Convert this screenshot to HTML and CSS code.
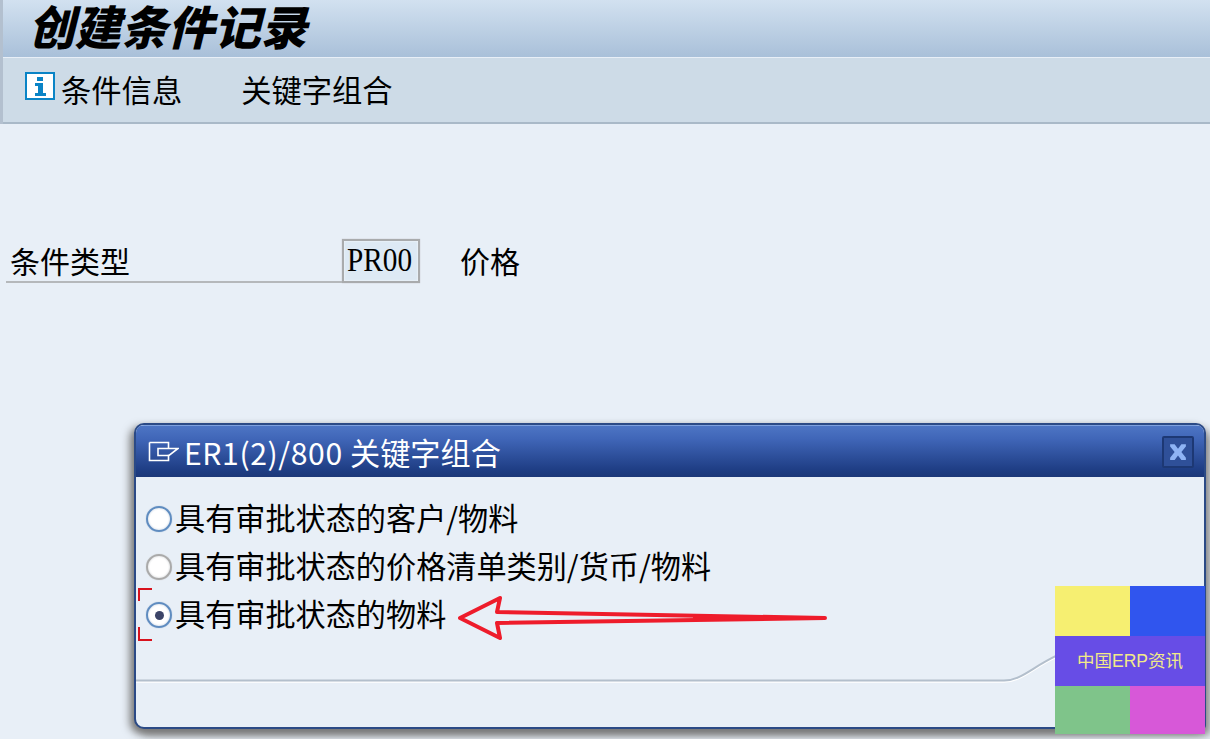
FILE: index.html
```html
<!DOCTYPE html>
<html lang="zh-CN">
<head>
<meta charset="UTF-8" />
<title>创建条件记录</title>
<link rel="stylesheet" href="styles.css">
</head>
<body>
  <header class="title-bar">
    <h1>创建条件记录</h1>
  </header>

  <nav class="toolbar">
    <a class="tool tool-info">
      <svg class="info-icon" width="30" height="28" viewBox="0 0 30 28">
        <rect x="1" y="1" width="28" height="26" fill="#fff" stroke="#0a84c6" stroke-width="2" />
        <rect x="12" y="5" width="6" height="4" fill="#0a84c6" />
        <path d="M10 11h8v10h3v3H10v-3h3v-7h-3z" fill="#0a84c6" />
      </svg>
      条件信息
    </a>
    <a class="tool">关键字组合</a>
  </nav>

  <main class="content">
    <div class="field-row">
      <label class="field-label">条件类型</label>
      <span class="field-input"><span class="field-value">PR00</span></span>
      <span class="field-text">价格</span>
    </div>
  </main>

  <section class="dialog">
    <div class="dialog-title">
      <svg class="dialog-icon" width="32" height="24" viewBox="0 0 32 24">
        <path d="M2.5 4.5h19v6M2.5 4.5v18h19v-6M11 10.5h20l-9 7H11z" fill="none" stroke="#fff" stroke-width="1.6" />
      </svg>
      <span><span class="dialog-code">ER1(2)/800 </span>关键字组合</span>
      <button class="dialog-close" type="button">
        <svg width="18" height="18" viewBox="2 2 16 16">
          <path d="M3 3h4l3 4 3-4h4v2l-4 5 4 5v2h-4l-3-4-3 4H3v-2l4-5-4-5z" fill="#8fb4f5" />
        </svg>
      </button>
    </div>
    <div class="dialog-body">
      <div class="radio-row"><span class="radio radio-blue"></span>具有审批状态的客户/物料</div>
      <div class="radio-row"><span class="radio radio-grey"></span>具有审批状态的价格清单类别/货币/物料</div>
      <div class="radio-row radio-focus"><span class="radio radio-blue radio-on"></span>具有审批状态的物料</div>
    </div>
    <svg class="dialog-line" width="920" height="40" viewBox="0 0 920 40">
      <path d="M0 32.5H868C885 32.5 895 20 920 8" fill="none" stroke="#fff" stroke-width="1.5" transform="translate(0 1.5)" />
      <path d="M0 32.5H868C885 32.5 895 20 920 8" fill="none" stroke="#b3bfcc" stroke-width="2" />
    </svg>
  </section>

  <svg class="arrow" width="385" height="52" viewBox="0 0 385 52">
    <path d="M379 26 L51 20 L54 6 L14 26 L54 46 L51 31 Z" fill="#e8eff7" stroke="#ee1c2b" stroke-width="4" stroke-linejoin="round" />
    <path d="M379 26 L247 23.4 L247 28.6 Z" fill="#ee1c2b" />
  </svg>

  <div class="badge">
    <div class="badge-row">
      <span class="yellow"></span>
      <span class="blue"></span>
    </div>
    <div class="badge-mid">中国ERP资讯</div>
    <div class="badge-row badge-low">
      <span class="green"></span>
      <span class="pink"></span>
    </div>
  </div>
</body>
</html>
```

FILE: styles.css
```css
* {
  box-sizing: border-box;
}
html, body {
  height: 100%;
}
body {
  margin: 0;
  background: #e8eff7;
  color: #000;
  font-family: "Noto Sans CJK SC", "Noto Sans", sans-serif;
  overflow: hidden;
  position: relative;
}
.title-bar {
  height: 57px;
  margin-left: 3px;
  padding: 0 0 0 25px;
  background: linear-gradient(180deg, #d2e1f0, #a9c0d9);
  box-shadow: -3px 0 0 #b3c0cf;
}
.title-bar h1 {
  margin: 0;
  font-size: 46.5px;
  line-height: 50px;
  font-weight: 900;
  font-style: italic;
}
.toolbar {
  height: 67px;
  margin-left: 3px;
  display: flex;
  align-items: center;
  padding: 0 0 3px 22px;
  gap: 59px;
  background: #cddbe7;
  border-top: 1px solid #e8eff7;
  border-bottom: 2px solid #a9b9c8;
  box-shadow: -3px 0 0 #b3c0cf;
}
.tool {
  display: flex;
  align-items: center;
  gap: 6px;
  font-size: 30.3px;
  line-height: 40px;
}
.info-icon {
  margin-top: -6px;
}
.content {
  padding: 115px 0 0 6px;
}
.field-row {
  display: flex;
  align-items: flex-end;
}
.field-label {
  width: 336px;
  height: 42px;
  padding-left: 4px;
  font-size: 30px;
  line-height: 39px;
  border-bottom: 2px solid #b5b8bb;
}
.field-input {
  width: 78px;
  height: 44px;
  padding-left: 3px;
  background: #dde9f4;
  border: 2px solid #a9abad;
  box-shadow: inset 0 0 2px #fff, 0 0 1px #b5b8bb;
  font-family: "Liberation Serif", serif;
  font-size: 34px;
  line-height: 38px;
}
.field-value {
  display: inline-block;
  transform: scaleX(0.86);
  transform-origin: left center;
}
.field-text {
  margin-left: 40px;
  font-size: 30px;
  line-height: 42px;
  padding-bottom: 2px;
}
.dialog {
  position: absolute;
  left: 134px;
  top: 423px;
  width: 1072px;
  height: 306px;
  border: 2px solid #2b4a86;
  border-radius: 10px 10px 4px 10px;
  background: #e8eff7;
  box-shadow: -4px 4px 8px #777, 4px 6px 8px #888;
  overflow: hidden;
}
.dialog-title {
  height: 52px;
  display: flex;
  align-items: center;
  padding: 0 10px 0 11px;
  gap: 5px;
  color: #fff;
  font-size: 30.15px;
  line-height: 40px;
  background: linear-gradient(180deg, #4d75c4 0, #4066b8 25%, #1f3e85 85%, #1c3879);
  border-top: 1px solid #7da0de;
}
.dialog-code {
  letter-spacing: 0.6px;
}
.dialog-icon {
  margin-top: -4px;
}
.dialog-close {
  margin-left: auto;
  width: 32px;
  height: 32px;
  padding: 0;
  display: flex;
  align-items: center;
  justify-content: center;
  background: #2f5099;
  border: 2px solid #1d3874;
  border-radius: 2px;
}
.dialog-body {
  padding: 18px 0 0 10px;
}
.radio-row {
  display: flex;
  align-items: center;
  height: 48px;
  padding-bottom: 4px;
  gap: 3px;
  font-size: 30.15px;
  line-height: 44px;
  position: relative;
}
.radio {
  width: 26px;
  height: 26px;
  margin-top: 4px;
  border-radius: 50%;
  background: radial-gradient(circle, #fff 55%, #e4e8ee);
  border: 2px solid #5f8cc0;
  box-shadow: inset 0 0 2px #c8d4e4, 0 0 1px #8fa9c8;
  flex: none;
  display: flex;
  align-items: center;
  justify-content: center;
}
.radio-grey {
  border-color: #aaaaaa;
  box-shadow: inset 0 0 2px #d8d8d8, 0 0 1px #bbbbbb;
}
.radio-on::after {
  content: "";
  width: 9px;
  height: 9px;
  border-radius: 50%;
  background: #3c4468;
}
.radio-focus::before,
.radio-focus::after {
  content: "";
  position: absolute;
  left: -8px;
  width: 12px;
  border-left: 2px solid #d8121d;
}
.radio-focus::before {
  top: -3px;
  height: 11px;
  border-top: 2px solid #d8121d;
}
.radio-focus::after {
  top: 36px;
  height: 12px;
  border-bottom: 2px solid #d8121d;
}
.dialog-line {
  position: absolute;
  left: 0;
  top: 223px;
}
.arrow {
  position: absolute;
  left: 446px;
  top: 592px;
}
.badge {
  position: absolute;
  left: 1055px;
  top: 586px;
  width: 150px;
}
.badge-row {
  display: flex;
  height: 50px;
}
.badge-row span {
  width: 75px;
}
.badge-low {
  height: 48px;
}
.yellow {
  background: #f6ef71;
}
.blue {
  background: #3055ee;
}
.green {
  background: #7fc48a;
}
.pink {
  background: #d758d8;
}
.badge-mid {
  height: 50px;
  background: #674de6;
  color: #f2ea88;
  font-family: "Liberation Sans", "Noto Sans CJK SC", sans-serif;
  font-size: 17.5px;
  line-height: 50px;
  text-align: center;
}
```
